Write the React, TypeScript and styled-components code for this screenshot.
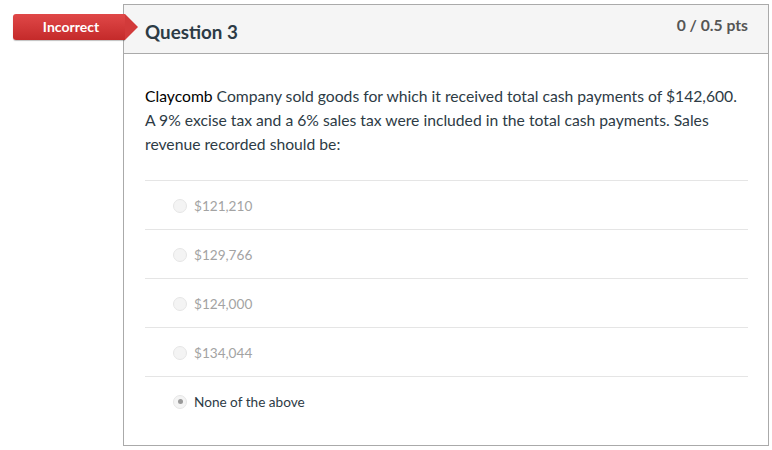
import * as React from "react";
import styled, { createGlobalStyle } from "styled-components";

const GlobalStyle = createGlobalStyle`
  body {
    margin: 0;
    background: #fff;
    font-family: Lato, "Open Sans", sans-serif;
    color: #2d3b45;
  }
`;

const Page = styled.div`
  padding: 4px 0 0 123px;
`;

const Card = styled.div`
  position: relative;
  width: 644px;
  height: 440px;
  border: 1px solid #aaaaaa;
  background: #fff;
`;

const Badge = styled.div`
  position: absolute;
  left: -111px;
  top: 9px;
  height: 26px;
  width: 112px;
  border-radius: 3px 0 0 3px;
  background: linear-gradient(#e04848, #c42a2a);
  color: #fff;
  font-size: 14px;
  font-weight: 700;
  display: flex;
  align-items: center;
  justify-content: center;
  padding: 0 0 1px 4px;
  box-sizing: border-box;
  box-shadow: 0 1px 1px rgba(0, 0, 0, 0.25);
  &::after {
    content: "";
    position: absolute;
    right: -13px;
    top: 0;
    border-top: 13px solid transparent;
    border-bottom: 13px solid transparent;
    border-left: 13px solid #d23a3a;
  }
`;

const Header = styled.div`
  height: 48px;
  background: #f5f5f5;
  border-bottom: 1px solid #aaaaaa;
  display: flex;
  justify-content: space-between;
  padding: 0 20px 0 21px;
`;

const Title = styled.h2`
  margin: 0;
  padding-top: 15px;
  font-size: 18.8px;
  font-weight: 700;
  color: #2d3b45;
`;

const Points = styled.div`
  padding-top: 11px;
  font-size: 15.7px;
  font-weight: 700;
  color: #555;
`;

const Body = styled.div`
  padding: 30px 20px 0 21px;
`;

const Text = styled.p`
  margin: 0 0 24px;
  font-size: 15.7px;
  line-height: 24px;
  color: #2d3b45;
  b {
    font-weight: 400;
    color: #000;
  }
`;

const Answer = styled.div<{ $chosen?: boolean }>`
  display: flex;
  align-items: center;
  border-top: 1px solid #e5e5e5;
  padding: 1px 0 0 28px;
  box-sizing: border-box;
  height: 49px;
  font-size: 13.6px;
  color: ${(p) => (p.$chosen ? "#2d3b45" : "#a3a3a3")};
`;

const Radio = styled.span<{ $checked?: boolean }>`
  width: 12px;
  height: 12px;
  border-radius: 50%;
  border: 1px solid #e6e6e6;
  background: #f4f4f4;
  margin-right: 7px;
  display: flex;
  align-items: center;
  justify-content: center;
  &::after {
    content: "";
    width: 5px;
    height: 5px;
    border-radius: 50%;
    background: ${(p) => (p.$checked ? "#999" : "transparent")};
  }
`;

const answers = ["$121,210", "$129,766", "$124,000", "$134,044", "None of the above"];

export default function App() {
  return (
    <Page>
      <GlobalStyle />
      <Card>
        <Badge>Incorrect</Badge>
        <Header>
          <Title>Question 3</Title>
          <Points>0 / 0.5 pts</Points>
        </Header>
        <Body>
          <Text>
            <b>Claycomb</b> Company sold goods for which it received total cash payments of $142,600.
            A 9% excise tax and a 6% sales tax were included in the total cash payments. Sales
            revenue recorded should be:
          </Text>
          {answers.map((a, i) => {
            const chosen = i === answers.length - 1;
            return (
              <Answer key={a} $chosen={chosen}>
                <Radio $checked={chosen} />
                {a}
              </Answer>
            );
          })}
        </Body>
      </Card>
    </Page>
  );
}
